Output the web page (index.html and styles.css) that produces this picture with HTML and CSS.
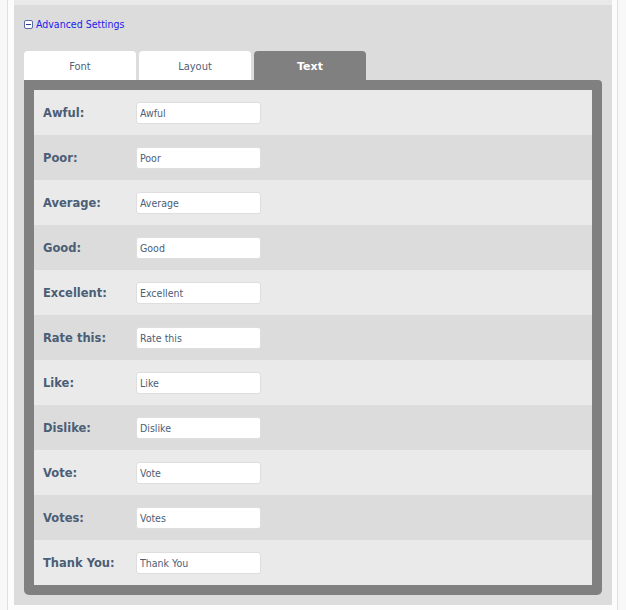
FILE: index.html
```html
<!DOCTYPE html>
<html>
<head>
<meta charset="utf-8">
<link rel="stylesheet" href="styles.css">
</head>
<body>
<div class="wrap">
  <div class="topstrip"></div>
  <div class="panel">
    <div class="header">
      <svg class="toggle" width="9" height="9" viewBox="0 0 9 9"><rect x="0.5" y="0.5" width="8" height="8" rx="1.5" fill="#fff" stroke="#5a6aa8"/><rect x="2" y="4" width="5" height="1" fill="#2a3a8a"/></svg>
      <span class="link">Advanced Settings</span>
    </div>
    <div class="tabs">
      <div class="tab">Font</div>
      <div class="tab">Layout</div>
      <div class="tab active">Text</div>
    </div>
    <div class="frame">
      <div class="row light"><span class="label">Awful:</span><input class="field" type="text" value="Awful"></div>
      <div class="row dark"><span class="label">Poor:</span><input class="field" type="text" value="Poor"></div>
      <div class="row light"><span class="label">Average:</span><input class="field" type="text" value="Average"></div>
      <div class="row dark"><span class="label">Good:</span><input class="field" type="text" value="Good"></div>
      <div class="row light"><span class="label">Excellent:</span><input class="field" type="text" value="Excellent"></div>
      <div class="row dark"><span class="label">Rate this:</span><input class="field" type="text" value="Rate this"></div>
      <div class="row light"><span class="label">Like:</span><input class="field" type="text" value="Like"></div>
      <div class="row dark"><span class="label">Dislike:</span><input class="field" type="text" value="Dislike"></div>
      <div class="row light"><span class="label">Vote:</span><input class="field" type="text" value="Vote"></div>
      <div class="row dark"><span class="label">Votes:</span><input class="field" type="text" value="Votes"></div>
      <div class="row light"><span class="label">Thank You:</span><input class="field" type="text" value="Thank You"></div>
    </div>
  </div>
</div>
</body>
</html>
```
FILE: styles.css
```css
html, body {
  margin: 0;
  padding: 0;
  background: #f8f8f8;
  font-family: "DejaVu Sans", Verdana, sans-serif;
}
.wrap {
  margin-left: 7px;
  width: 611px;
  height: 610px;
  border-left: 1px solid #e0e0e0;
  border-right: 1px solid #e0e0e0;
  background: #fcfcfc;
  padding: 0 5px 0 6px;
  box-sizing: border-box;
}
.topstrip {
  height: 5px;
  background: #e9e9e9;
}
.panel {
  background: #dcdcdc;
  padding: 12px 10px 9px 10px;
  height: 600px;
  box-sizing: border-box;
}
.header {
  display: flex;
  align-items: center;
  height: 14px;
  gap: 3px;
  margin-bottom: 20px;
}
.toggle {
  display: block;
}
.link {
  color: #1a1aee;
  font-family: "DejaVu Sans Condensed", "DejaVu Sans", sans-serif;
  font-size: 10.5px;
  line-height: 14px;
}
.tabs {
  display: flex;
  gap: 3px;
  height: 29px;
}
.tab {
  width: 112px;
  background: #ffffff;
  border-radius: 4px 4px 0 0;
  color: #4f6177;
  font-family: "DejaVu Sans Condensed", "DejaVu Sans", sans-serif;
  font-size: 11px;
  line-height: 29px;
  padding-top: 1px;
  box-sizing: border-box;
  text-align: center;
}
.tab.active {
  background: #808080;
  color: #ffffff;
  font-weight: bold;
  font-family: "DejaVu Sans", sans-serif;
  font-size: 11px;
}
.frame {
  background: #808080;
  padding: 10px;
  border-radius: 0 4px 5px 5px;
}
.row {
  display: flex;
  align-items: center;
  height: 45px;
  padding-left: 9px;
}
.row.light { background: #eaeaea; }
.row.dark { background: #dcdcdc; }
.label {
  width: 92px;
  color: #4b5e75;
  font-weight: bold;
  font-size: 11.5px;
}
.field {
  width: 125px;
  height: 22px;
  box-sizing: border-box;
  margin: 0 0 0 1px;
  border: 1px solid #dedede;
  border-radius: 3px;
  background: #fff;
  padding: 0 3px;
  color: #4b5e75;
  font-family: "DejaVu Sans Condensed", "DejaVu Sans", sans-serif;
  font-size: 10.5px;
  outline: none;
}
```
